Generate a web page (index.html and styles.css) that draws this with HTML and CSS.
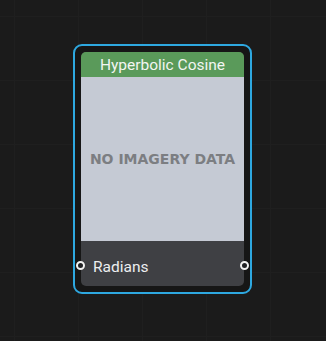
FILE: index.html
```html
<!DOCTYPE html>
<html lang="en">
<head>
    <meta charset="UTF-8">
    <title>Hyperbolic Cosine</title>
    <link rel="stylesheet" href="styles.css">
</head>
<body>
    <div class="canvas">
        <div class="node-frame">
            <div class="node">
                <div class="node-title">Hyperbolic Cosine</div>
                <div class="node-preview">NO IMAGERY DATA</div>
                <div class="node-inputs">
                    <div class="socket-row">
                        <span class="port port-in"></span>
                        <span class="socket-label">Radians</span>
                        <span class="port port-out"></span>
                    </div>
                </div>
            </div>
        </div>
    </div>
</body>
</html>
```

FILE: styles.css
```css
body {
    margin: 0;
    background-color: #1b1b1b;
    font-family: Roboto, 'Noto Sans', sans-serif;
}
.canvas {
    position: relative;
    width: 326px;
    height: 341px;
    overflow: hidden;
    background-color: #1b1b1b;
    background-image:
        linear-gradient(to right, #1f1f1f 1px, transparent 1px),
        linear-gradient(to bottom, #1f1f1f 1px, transparent 1px);
    background-size: 64px 64px;
    background-position: 14px 16px;
}
.node-frame {
    position: absolute;
    left: 73px;
    top: 44px;
    padding: 6px;
    border: 2px solid #2ea8e0;
    border-radius: 9px;
    background: #161616;
}
.node {
    width: 163px;
    height: 234px;
    display: flex;
    flex-direction: column;
    border-radius: 5px;
    background: #3f4044;
}
.node-title {
    height: 25px;
    line-height: 27px;
    background: #5a9a5a;
    color: #f2f5f2;
    font-size: 15.5px;
    text-align: center;
    border-radius: 5px 5px 0 0;
}
.node-preview {
    height: 164px;
    display: flex;
    align-items: center;
    justify-content: center;
    background: #c5cad4;
    color: #7c7e82;
    font-family: 'DejaVu Sans', sans-serif;
    font-weight: bold;
    font-size: 14px;
}
.node-inputs {
    flex: 1;
    padding-top: 17px;
}
.socket-row {
    position: relative;
    height: 18px;
    display: flex;
    align-items: center;
    padding-left: 12px;
}
.socket-label {
    color: #eceef0;
    font-size: 15.5px;
}
.port {
    position: absolute;
    top: 3px;
    width: 5px;
    height: 5px;
    border: 2px solid #f2f2f2;
    border-radius: 50%;
    background: #202124;
}
.port-in {
    left: -5px;
}
.port-out {
    right: -5px;
}
```
